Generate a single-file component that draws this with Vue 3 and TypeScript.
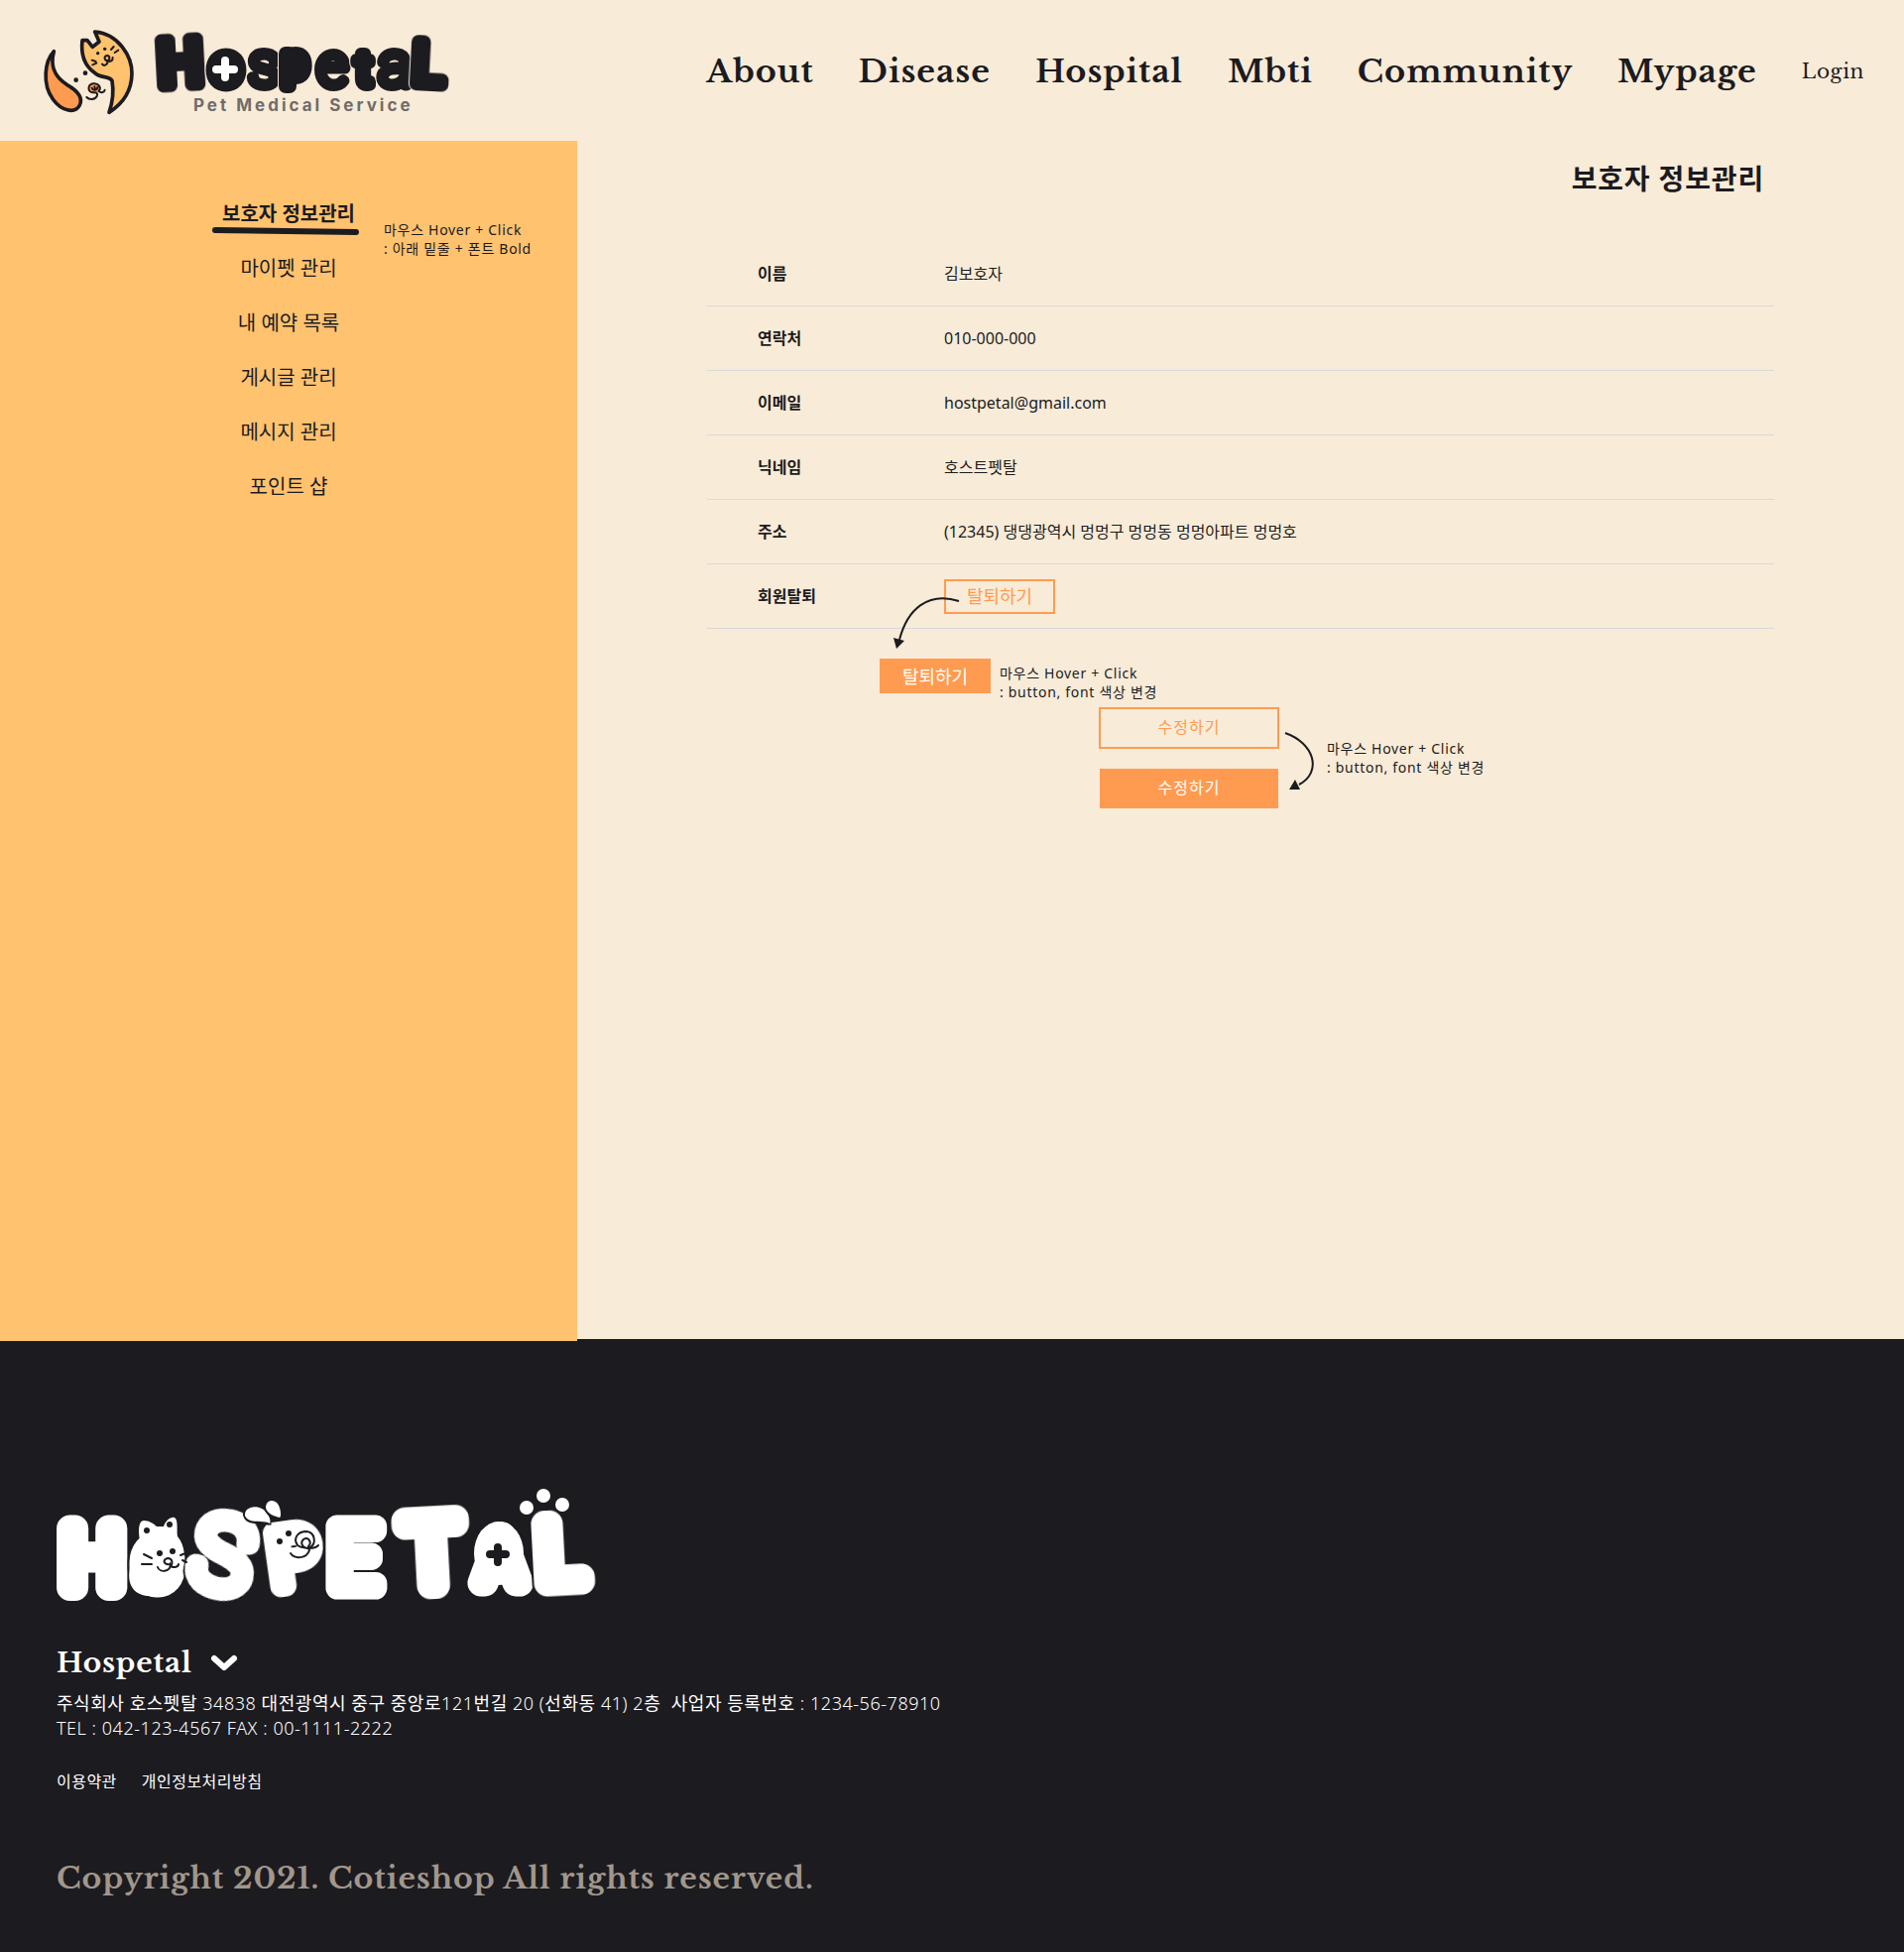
<script setup lang="ts">
interface ProfileRow {
  label: string
  value: string
}

interface Letter {
  char: string
  x: number
  y: number
  size: number
  stroke: number
  weight: number
  tilt: number
}

const navItems: string[] = ['About', 'Disease', 'Hospital', 'Mbti', 'Community', 'Mypage']

const menuItems: string[] = [
  '보호자 정보관리',
  '마이펫 관리',
  '내 예약 목록',
  '게시글 관리',
  '메시지 관리',
  '포인트 샵',
]

const profile: ProfileRow[] = [
  { label: '이름', value: '김보호자' },
  { label: '연락처', value: '010-000-000' },
  { label: '이메일', value: 'hostpetal@gmail.com' },
  { label: '닉네임', value: '호스트펫탈' },
  { label: '주소', value: '(12345) 댕댕광역시 멍멍구 멍멍동 멍멍아파트 멍멍호' },
]

/* Hangul is set in regular weight, figures and Latin in light. */
const addressLine =
  '주식회사 호스펫탈 34838 대전광역시 중구 중앙로121번길 20 (선화동 41) 2층\u00a0 사업자 등록번호 : 1234-56-78910'
const addressRuns: string[] = addressLine.split(/([가-힣]+)/).filter((run) => run.length > 0)

function isHangul(run: string): boolean {
  return /[가-힣]/.test(run)
}

const headerMark: Letter[] = [
  { char: 'H', x: 4, y: 58, size: 64, stroke: 13, weight: 500, tilt: -3 },
  { char: 'o', x: 57, y: 57, size: 56, stroke: 14, weight: 400, tilt: 0 },
  { char: 's', x: 96, y: 58, size: 62, stroke: 11, weight: 100, tilt: 0 },
  { char: 'p', x: 130, y: 50, size: 44, stroke: 14, weight: 400, tilt: 0 },
  { char: 'e', x: 165, y: 58, size: 60, stroke: 11, weight: 100, tilt: 0 },
  { char: 't', x: 204, y: 58, size: 48, stroke: 12, weight: 400, tilt: 0 },
  { char: 'a', x: 227, y: 58, size: 62, stroke: 11, weight: 100, tilt: 0 },
  { char: 'L', x: 261, y: 57, size: 59, stroke: 14, weight: 400, tilt: 3 },
]

const footerMark: Letter[] = [
  { char: 'H', x: 6, y: 101, size: 84, stroke: 27, weight: 300, tilt: 0 },
  { char: 'O', x: 82, y: 98, size: 58, stroke: 24, weight: 300, tilt: 0 },
  { char: 'S', x: 138, y: 103, size: 98, stroke: 21, weight: 100, tilt: 12 },
  { char: 'P', x: 216, y: 97, size: 76, stroke: 22, weight: 300, tilt: -8 },
  { char: 'E', x: 275, y: 101, size: 88, stroke: 23, weight: 300, tilt: 0 },
  { char: 'T', x: 351, y: 98, size: 92, stroke: 28, weight: 300, tilt: -3 },
  { char: 'A', x: 427, y: 96, size: 66, stroke: 27, weight: 300, tilt: 0 },
  { char: 'L', x: 486, y: 95, size: 84, stroke: 27, weight: 300, tilt: -3 },
]

/* Letters lean around the middle of their own shape. */
function lean(l: Letter): string {
  return `rotate(${l.tilt} ${l.x + Math.round(l.size / 3)} ${l.y - Math.round(l.size / 3)})`
}
</script>

<template>
  <div class="page">
    <header class="header">
      <a class="brand" href="#">
        <svg class="symbol" viewBox="42 24 276 264" aria-hidden="true">
          <g stroke="#1c1b20" stroke-width="11" stroke-linejoin="round" stroke-linecap="round">
            <path d="M73 95C45 125 37 195 70 240C95 275 135 285 150 260C164 235 142 213 112 196C85 178 58 150 73 95Z" fill="#ff9b50" />
            <path d="M197 36L210 66L190 82L174 62L159 62C154 105 168 140 196 160C215 178 240 168 249 184C254 212 252 245 240 280C280 255 308 215 309 163C310 110 268 42 197 36Z" fill="#ffc26f" />
          </g>
          <g fill="none" stroke="#1c1b20" stroke-width="6" stroke-linecap="round">
            <path d="M188 122L200 126M190 136L202 131M246 90L254 81M257 99L268 92" />
            <path d="M236 124C224 122 224 110 234 108C244 108 243 122 234 124C238 134 226 142 219 134M236 124C243 128 252 124 251 114" />
          </g>
          <g fill="#1c1b20">
            <circle cx="206" cy="101" r="5" />
            <circle cx="227" cy="88" r="5" />
            <circle cx="168" cy="161" r="7" />
            <circle cx="140" cy="182" r="7" />
          </g>
          <ellipse cx="195" cy="208" rx="18" ry="15" fill="#ff9b50" />
          <path d="M172 234C180 243 198 243 204 229C206 222 200 218 190 220C174 216 175 197 191 193C208 190 218 204 209 216C216 222 226 220 227 212M188 206C192 216 204 214 205 204M196 202L198 210" fill="none" stroke="#1c1b20" stroke-width="6" stroke-linecap="round" />
        </svg>
        <span class="brand-text">
          <svg class="wordmark" viewBox="0 0 300 66">
            <text
              v-for="l in headerMark"
              :key="l.char"
              class="letter"
              :x="l.x"
              :y="l.y"
              :font-size="l.size"
              :font-weight="l.weight"
              :stroke-width="l.stroke"
              :transform="lean(l)"
            >{{ l.char }}</text>
            <ellipse cx="72" cy="41" rx="13" ry="15" fill="#1c1b20" />
            <path d="M72 33V50M63 42H81" stroke="#fff" stroke-width="8" stroke-linecap="round" />
          </svg>
          <span class="tagline">Pet Medical Service</span>
        </span>
      </a>
      <nav class="nav">
        <a v-for="item in navItems" :key="item" class="nav-link" href="#">{{ item }}</a>
        <a class="login" href="#">Login</a>
      </nav>
    </header>

    <div class="body">
      <aside class="sidebar">
        <ul class="menu">
          <li v-for="(item, i) in menuItems" :key="item" class="menu-item">
            <a href="#" :class="{ active: i === 0 }">{{ item }}</a>
            <template v-if="i === 0">
              <svg class="underline" viewBox="0 0 148 8" aria-hidden="true">
                <path d="M3 3L145 5" stroke="#1c1b20" stroke-width="6" stroke-linecap="round" />
              </svg>
              <p class="note menu-note">마우스 Hover + Click<br />: 아래 밑줄 + 폰트 Bold</p>
            </template>
          </li>
        </ul>
      </aside>

      <main class="content">
        <h1 class="title">보호자 정보관리</h1>
        <table class="profile">
          <tbody>
            <tr v-for="row in profile" :key="row.label">
              <th scope="row">{{ row.label }}</th>
              <td>{{ row.value }}</td>
            </tr>
            <tr>
              <th scope="row">회원탈퇴</th>
              <td>
                <div class="withdraw">
                  <button type="button" class="btn small">탈퇴하기</button>
                  <svg class="arrow-down" viewBox="0 0 70 54" aria-hidden="true">
                    <path d="M67 6C36 -4 15 14 7 45" fill="none" stroke="#1c1b20" stroke-width="2" />
                    <path d="M1 43L12 46L4 54Z" fill="#1c1b20" />
                  </svg>
                </div>
              </td>
            </tr>
          </tbody>
        </table>

        <div class="withdraw-state">
          <button type="button" class="btn small filled">탈퇴하기</button>
          <p class="note">마우스 Hover + Click<br />: button, font 색상 변경</p>
        </div>

        <div class="edit">
          <div class="edit-buttons">
            <button type="button" class="btn large">수정하기</button>
            <button type="button" class="btn large filled">수정하기</button>
          </div>
          <svg class="arrow-turn" viewBox="0 0 30 60" aria-hidden="true">
            <path d="M0 5C29 15 38 44 14 57" fill="none" stroke="#1c1b20" stroke-width="2" />
            <path d="M10 52L15 62L4 62Z" fill="#1c1b20" />
          </svg>
          <p class="note">마우스 Hover + Click<br />: button, font 색상 변경</p>
        </div>
      </main>
    </div>

    <footer class="footer">
      <svg class="footer-logo" viewBox="0 0 546 118">
        <text
          v-for="l in footerMark"
          :key="l.char"
          class="letter light"
          :x="l.x"
          :y="l.y"
          :font-size="l.size"
          :font-weight="l.weight"
          :stroke-width="l.stroke"
          :transform="lean(l)"
        >{{ l.char }}</text>
        <!-- cat head -->
        <path d="M84 53C82 42 83 33 88 33C93 33 98 36 101 39L108 39C110 33 115 29 119 30C123 32 121 44 122 49C130 58 131 75 126 87C116 104 102 109 91 109C76 107 71 95 74 81C76 69 81 61 84 53Z" fill="#fff" />
        <g fill="#1c1b20">
          <circle cx="91" cy="43" r="3" />
          <circle cx="114" cy="37" r="3" />
          <circle cx="104" cy="66" r="3" />
          <circle cx="117" cy="64" r="3" />
          <circle cx="225" cy="54" r="3" />
          <circle cx="234" cy="46" r="3" />
        </g>
        <g fill="none" stroke="#1c1b20" stroke-width="2" stroke-linecap="round">
          <path d="M88 67L96 71M86 77H96M125 68L130 66M127 73L131 75" />
          <path d="M115 77C107 78 107 72 112 71C118 71 117 79 115 77C115 85 104 86 102 80M115 77C116 82 123 80 123 77" />
          <!-- dog muzzle -->
          <path d="M236 66C240 72 252 72 255 63C255 59 248 62 243 58C238 50 244 44 252 44C261 45 262 56 256 60C249 63 245 56 249 52C254 49 258 55 254 59M255 61C258 61 262 60 264 58" />
        </g>
        <!-- ears and paw pads -->
        <g fill="#fff">
          <path class="ear" d="M190 28C189 20 200 17 207 21C213 24 217 33 215 36C209 32 193 37 190 28Z" />
          <path class="ear" d="M211 20C211 12 219 11 223 16C226 20 227 29 225 30C220 29 212 26 211 20Z" />
          <circle cx="474" cy="20" r="7" />
          <circle cx="491" cy="8" r="7" />
          <circle cx="510" cy="17" r="7" />
        </g>
        <ellipse cx="446" cy="66" rx="25" ry="32" fill="#fff" />
        <path d="M445 60V75M437 67H453" stroke="#1c1b20" stroke-width="8" stroke-linecap="round" />
      </svg>

      <button type="button" class="family">
        Hospetal
        <svg viewBox="0 0 28 18" aria-hidden="true">
          <path d="M4 4L14 13L24 4" fill="none" stroke="#fff" stroke-width="6" stroke-linecap="round" stroke-linejoin="round" />
        </svg>
      </button>
      <address class="address">
        <span v-for="(run, i) in addressRuns" :key="i" :class="{ hangul: isHangul(run) }">{{ run }}</span><br />
        TEL : 042-123-4567 FAX : 00-1111-2222
      </address>
      <div class="policies">
        <a href="#">이용약관</a>
        <a href="#">개인정보처리방침</a>
      </div>
      <p class="copyright">Copyright 2021. Cotieshop All rights reserved.</p>
    </footer>
  </div>
</template>

<style>
body {
  margin: 0;
  background: #f8ebd8;
}
</style>

<style scoped>
.page {
  color: #1c1b20;
  background: #f8ebd8;
  font-family: "Noto Sans", "Noto Sans CJK KR", sans-serif;
  font-size: 16px;
}

a {
  color: inherit;
  text-decoration: none;
}

p {
  margin: 0;
}

svg {
  display: block;
  overflow: visible;
}

.header {
  display: flex;
  align-items: center;
  justify-content: space-between;
  height: 142px;
  padding: 0 40px 0 44px;
}

.brand {
  display: flex;
  align-items: center;
  gap: 19px;
  padding-top: 2px;
}

.symbol {
  width: 92px;
  height: 88px;
}

.wordmark {
  width: 300px;
  height: 66px;
}

.letter {
  font-family: Roboto, sans-serif;
  fill: #1c1b20;
  stroke: #1c1b20;
  stroke-linejoin: round;
  filter: drop-shadow(-1px 0 0 #f8ebd8);
}

.letter.light {
  fill: #fff;
  stroke: #fff;
  filter: drop-shadow(-2px 0 0 #1c1b20);
}

.ear {
  filter: drop-shadow(1px 2px 0 #1c1b20) drop-shadow(-2px 0 0 #1c1b20);
}

.tagline {
  display: block;
  padding: 2px 0 0 40px;
  color: #706c69;
  font-family: Inter, sans-serif;
  font-size: 17px;
  font-weight: 700;
  letter-spacing: 3px;
  line-height: 20px;
  white-space: nowrap;
}

.nav {
  display: flex;
  align-items: center;
  gap: 45px;
  padding-top: 2px;
  font-family: "Libre Baskerville", "Liberation Serif", serif;
}

.nav a {
  letter-spacing: 0.03em;
}

.nav-link {
  font-size: 32px;
  font-weight: 700;
  line-height: 40px;
}

.login {
  font-size: 20px;
}

.body {
  display: flex;
  min-height: 1208px;
}

.sidebar {
  position: relative;
  flex: 0 0 582px;
  margin-bottom: -2px;
  background: #ffc26f;
}

.menu {
  display: flex;
  flex-direction: column;
  gap: 25px;
  margin: 0;
  padding: 59px 0 0;
  list-style: none;
}

.menu-item {
  position: relative;
  font-size: 20px;
  line-height: 30px;
  text-align: center;
}

.active {
  font-weight: 700;
}

.underline {
  position: absolute;
  top: 28px;
  left: 214px;
  width: 148px;
  height: 8px;
}

.note {
  font-size: 14px;
  letter-spacing: 0.05em;
  line-height: 19px;
  text-align: left;
  white-space: nowrap;
}

.menu-note {
  position: absolute;
  top: 21px;
  left: 387px;
}

.content {
  flex: 1;
  padding: 18px 131px 0;
}

.title {
  margin: 0 10px 0 0;
  font-size: 28px;
  font-weight: 700;
  letter-spacing: 0.03em;
  line-height: 40px;
  text-align: right;
}

.profile {
  width: 100%;
  margin-top: 44px;
  border-collapse: separate;
  border-spacing: 0;
  table-layout: fixed;
}

.profile th,
.profile td {
  box-sizing: border-box;
  height: 65px;
  padding: 0;
  border-bottom: 1px solid #d9d9d9;
  line-height: 24px;
  text-align: left;
}

.profile th {
  width: 239px;
  padding-left: 51px;
  font-weight: 700;
}

.withdraw {
  position: relative;
}

.arrow-down {
  position: absolute;
  top: 16px;
  left: -52px;
  width: 70px;
  height: 54px;
}

.btn {
  display: block;
  box-sizing: border-box;
  padding: 0 0 2px;
  border: 2px solid #ff9b50;
  background: transparent;
  color: #ff9b50;
  font-family: inherit;
}

.btn.small {
  width: 112px;
  height: 35px;
  font-size: 18px;
}

.btn.large {
  width: 182px;
  height: 42px;
  padding-bottom: 4px;
  font-size: 16px;
  letter-spacing: 1px;
}

.btn.filled {
  background: #ff9b50;
  color: #fff;
}

.btn.large.filled {
  width: 180px;
  height: 40px;
}

.withdraw-state {
  display: flex;
  align-items: flex-start;
  gap: 9px;
  padding: 30px 0 6px 174px;
}

.withdraw-state .note {
  padding-top: 5px;
}

.edit {
  display: flex;
  align-items: center;
  padding-left: 395px;
}

.edit-buttons {
  display: flex;
  flex-direction: column;
  align-items: center;
  gap: 20px;
}

.arrow-turn {
  width: 30px;
  height: 60px;
  margin: 0 12px 0 6px;
}

.footer {
  min-height: 468px;
  padding: 150px 57px 0;
  background: #1c1b20;
  color: #fff;
}

.footer-logo {
  width: 546px;
  height: 118px;
}

.family {
  display: flex;
  align-items: center;
  gap: 18px;
  margin-top: 39px;
  padding: 0;
  border: 0;
  background: none;
  color: #fff;
  font-family: "Libre Baskerville", "Liberation Serif", serif;
  font-size: 28px;
  font-weight: 700;
  letter-spacing: 0.03em;
  line-height: 40px;
}

.family svg {
  width: 28px;
  height: 18px;
}

.address {
  margin-top: 8px;
  font-size: 18px;
  font-style: normal;
  font-weight: 300;
  letter-spacing: 0.03em;
  line-height: 25px;
}

.hangul {
  font-weight: 400;
}

.policies {
  display: flex;
  gap: 25px;
  margin-top: 29px;
  font-size: 16px;
  letter-spacing: 0.03em;
  line-height: 24px;
}

.copyright {
  margin-top: 66px;
  color: #a1978b;
  font-family: "Libre Baskerville", "Liberation Serif", serif;
  font-size: 30px;
  font-weight: 700;
  letter-spacing: 0.03em;
  line-height: 40px;
}
</style>
